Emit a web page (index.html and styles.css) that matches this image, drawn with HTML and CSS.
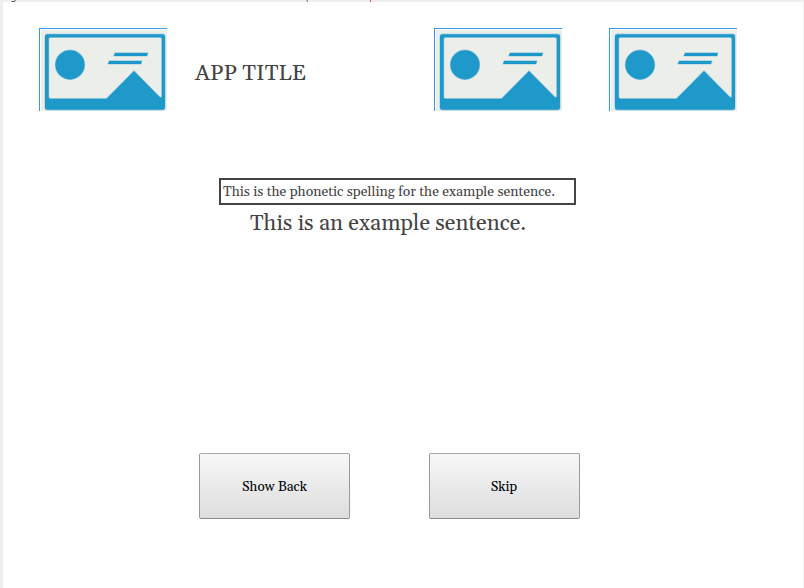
FILE: index.html
```html
<!DOCTYPE html>
<html lang="en">
<head>
<meta charset="utf-8">
<title>App Title</title>
<link rel="stylesheet" href="styles.css">
</head>
<body>
<svg class="defs" width="0" height="0" aria-hidden="true">
  <symbol id="placeholder" viewBox="0 0 128 83">
    <path class="edge" d="M0 0H128V1H1V83H0z"/>
    <path class="paper" d="M2 2H128V83H2z"/>
    <path class="ink" fill-rule="evenodd" d="M8.5 6.2H123.5Q126 6.2 126 8.5V79.5Q126 81.8 123.5 81.8H8.5Q6 81.8 6 79.5V8.5Q6 6.2 8.5 6.2zM11.5 9.3Q9.7 9.3 9.7 11V69Q9.7 70.7 11.5 70.7H67.5L95 43L121 69.3Q122.8 70 122.8 68V11Q122.8 9.3 121 9.3z"/>
    <circle class="ink" cx="31" cy="36.8" r="14.6"/>
    <path class="ink" d="M76 24.9H108.8L108 27.9H74.8zM70.2 32.9H102.8L102 35.9H69z"/>
  </symbol>
</svg>
<svg class="scraps" width="804" height="2" aria-hidden="true">
  <path fill="#e5a45c" d="M11 1h2v1h-2zM14 0h1v1h-1zM306 0h1v1h-1z"/>
  <path fill="#555" d="M12 1h3v1h-3z"/>
  <path fill="#739ac9" d="M15 0h1v1h-1zM307 0h1v2h-1z"/>
  <path fill="#c96a5c" d="M370 0h1v2h-1z"/>
</svg>
<main class="app">
  <header class="top">
    <svg class="image"><use href="#placeholder"/></svg>
    <h1 class="title">APP TITLE</h1>
    <svg class="image"><use href="#placeholder"/></svg>
    <svg class="image"><use href="#placeholder"/></svg>
  </header>
  <section class="card">
    <div class="phonetic">This is the phonetic spelling for the example sentence.</div>
    <p class="sentence">This is an example sentence.</p>
  </section>
  <div class="actions">
    <button class="button">Show Back</button>
    <button class="button skip">Skip</button>
  </div>
</main>
</body>
</html>
```
FILE: styles.css
```css
* { box-sizing: border-box; }
body {
  margin: 0;
  color: #444;
  font-family: Georgia, Gelasio, "Liberation Serif", serif;
}
.defs { display: block; }
.scraps { position: absolute; top: 0; left: 0; }
.app {
  height: 588px;
  border: solid #eee;
  border-width: 2px 1px 0 3px;
  background: #fff;
  overflow: hidden;
}
.top {
  display: grid;
  grid-template-columns: 156px 239px 175px 128px;
  height: 109px;
  padding: 26px 0 0 36px;
}
.image { display: block; width: 128px; height: 83px; }
.edge { fill: #3399f0; }
.paper { fill: #eceeea; }
.ink {
  fill: #1e99ca;
  stroke: #1e99ca;
  stroke-width: 1.2px;
  stroke-opacity: 0.35;
  stroke-linejoin: round;
}
.title {
  margin: 0;
  line-height: 92px;
  font-size: 22.2px;
  font-weight: normal;
  white-space: nowrap;
}
.card { padding: 67px 0 0 216px; }
.phonetic {
  width: 357px;
  height: 27px;
  border: 2px solid #444;
  padding-left: 2px;
  font-size: 14px;
  letter-spacing: -0.03px;
  line-height: 25px;
  white-space: nowrap;
}
.sentence {
  margin: 0 0 0 31px;
  font-size: 22px;
  line-height: 38px;
  white-space: nowrap;
}
.actions {
  display: flex;
  gap: 79px;
  padding: 210px 0 0 196px;
}
.button {
  width: 151px;
  height: 66px;
  padding: 2px 0 0;
  border: 1px solid #999;
  border-top-color: #a6a6a6;
  border-bottom-color: #8c8c8c;
  border-radius: 2px;
  background: linear-gradient(#f8f8f8, #ddd);
  color: #000;
  font: 13.5px Georgia, Gelasio, "Liberation Serif", serif;
}
.skip { padding-right: 1px; }
```
